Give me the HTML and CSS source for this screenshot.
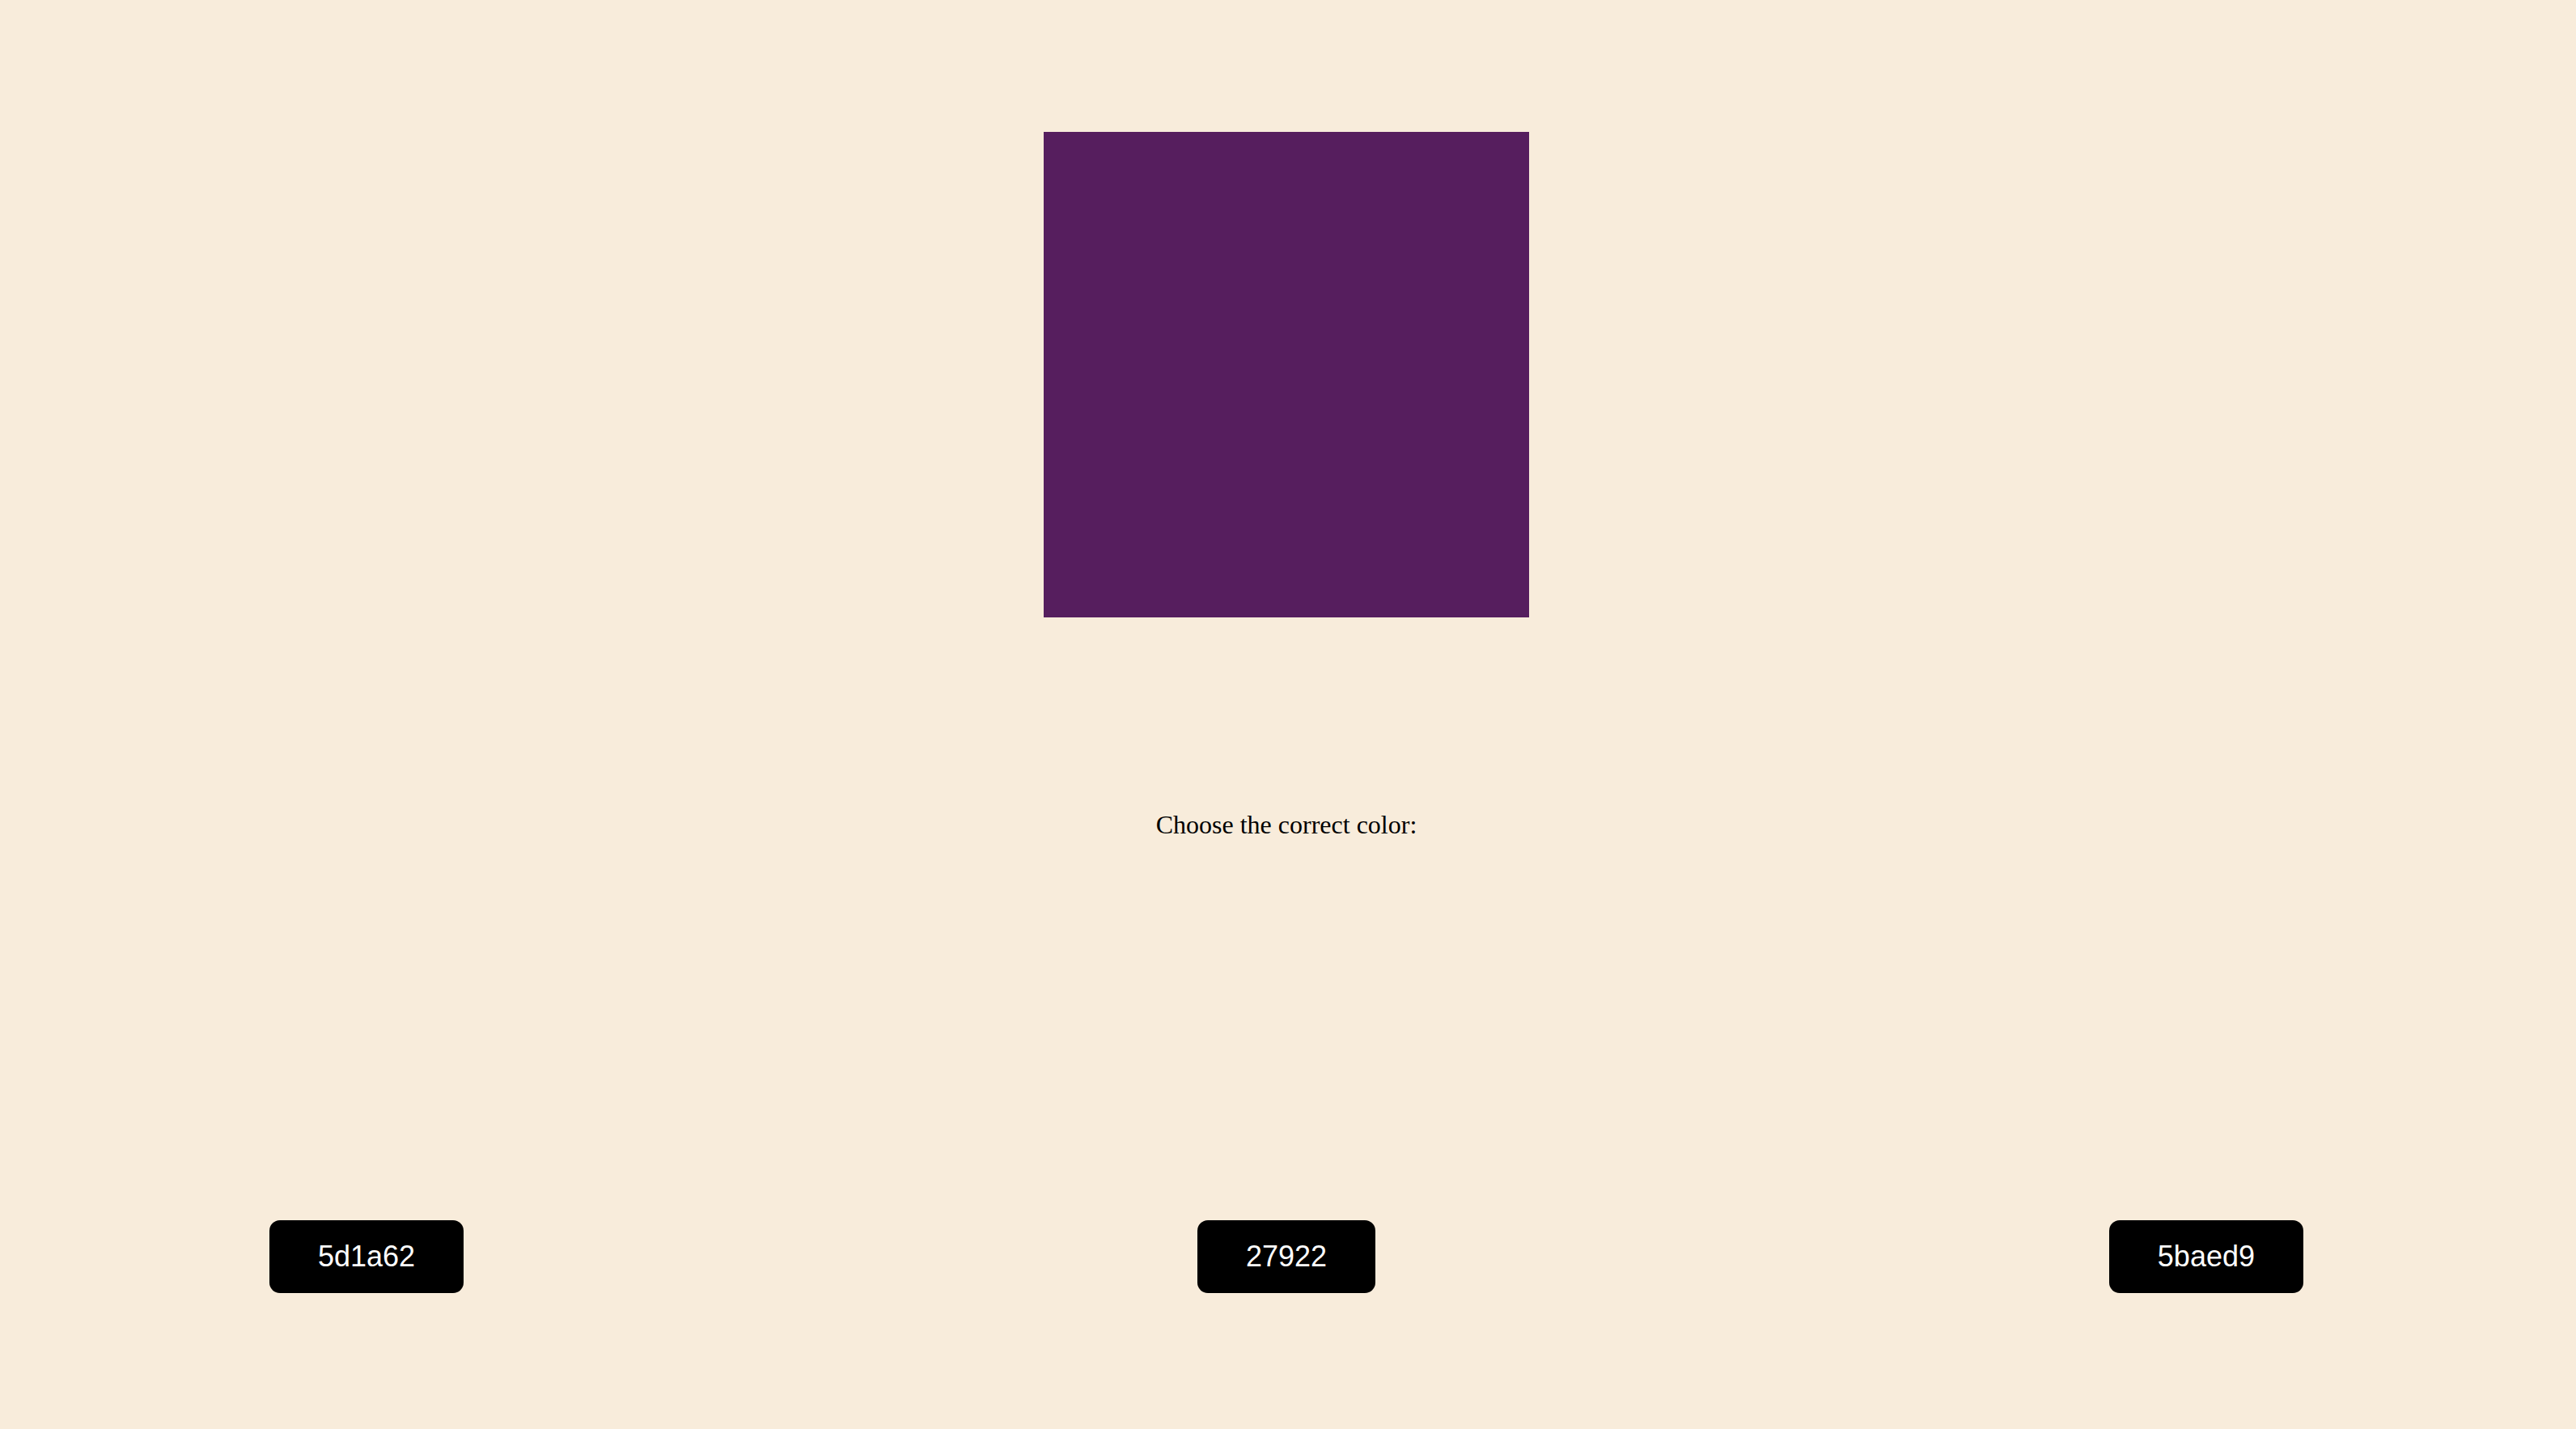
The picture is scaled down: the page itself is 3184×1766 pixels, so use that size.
FILE: index.html
```html
<!DOCTYPE html>
<html lang="en">
<head>
<meta charset="utf-8">
<title>Guess the color</title>
<link rel="stylesheet" href="styles.css">
</head>
<body>
<main class="game">
  <div class="swatch"></div>
  <p class="prompt">Choose the correct color:</p>
  <div class="options">
    <button class="option">5d1a62</button>
    <button class="option">27922</button>
    <button class="option">5baed9</button>
  </div>
</main>
</body>
</html>
```
FILE: styles.css
```css
html, body {
  margin: 0;
  padding: 0;
}
body {
  background: #f8ecdb;
  height: 1766px;
  overflow: hidden;
}
.game {
  display: flex;
  flex-direction: column;
  align-items: center;
  padding: 163px 4px 0 0;
}
.swatch {
  width: 600px;
  height: 600px;
  background: #561e5e;
}
.prompt {
  margin: 238px 0 0;
  font-family: "Liberation Serif", "Times New Roman", serif;
  font-size: 32px;
  line-height: 36px;
  color: #000;
}
.options {
  align-self: stretch;
  display: flex;
  justify-content: space-between;
  margin-top: 471px;
  padding: 0 333px 0 333px;
}
.option {
  display: flex;
  align-items: center;
  justify-content: center;
  height: 90px;
  padding: 0 60px;
  border: none;
  border-radius: 13px;
  background: #000;
  color: #fff;
  font-family: "Liberation Sans", Arial, sans-serif;
  font-size: 36px;
  line-height: 42px;
}
```
